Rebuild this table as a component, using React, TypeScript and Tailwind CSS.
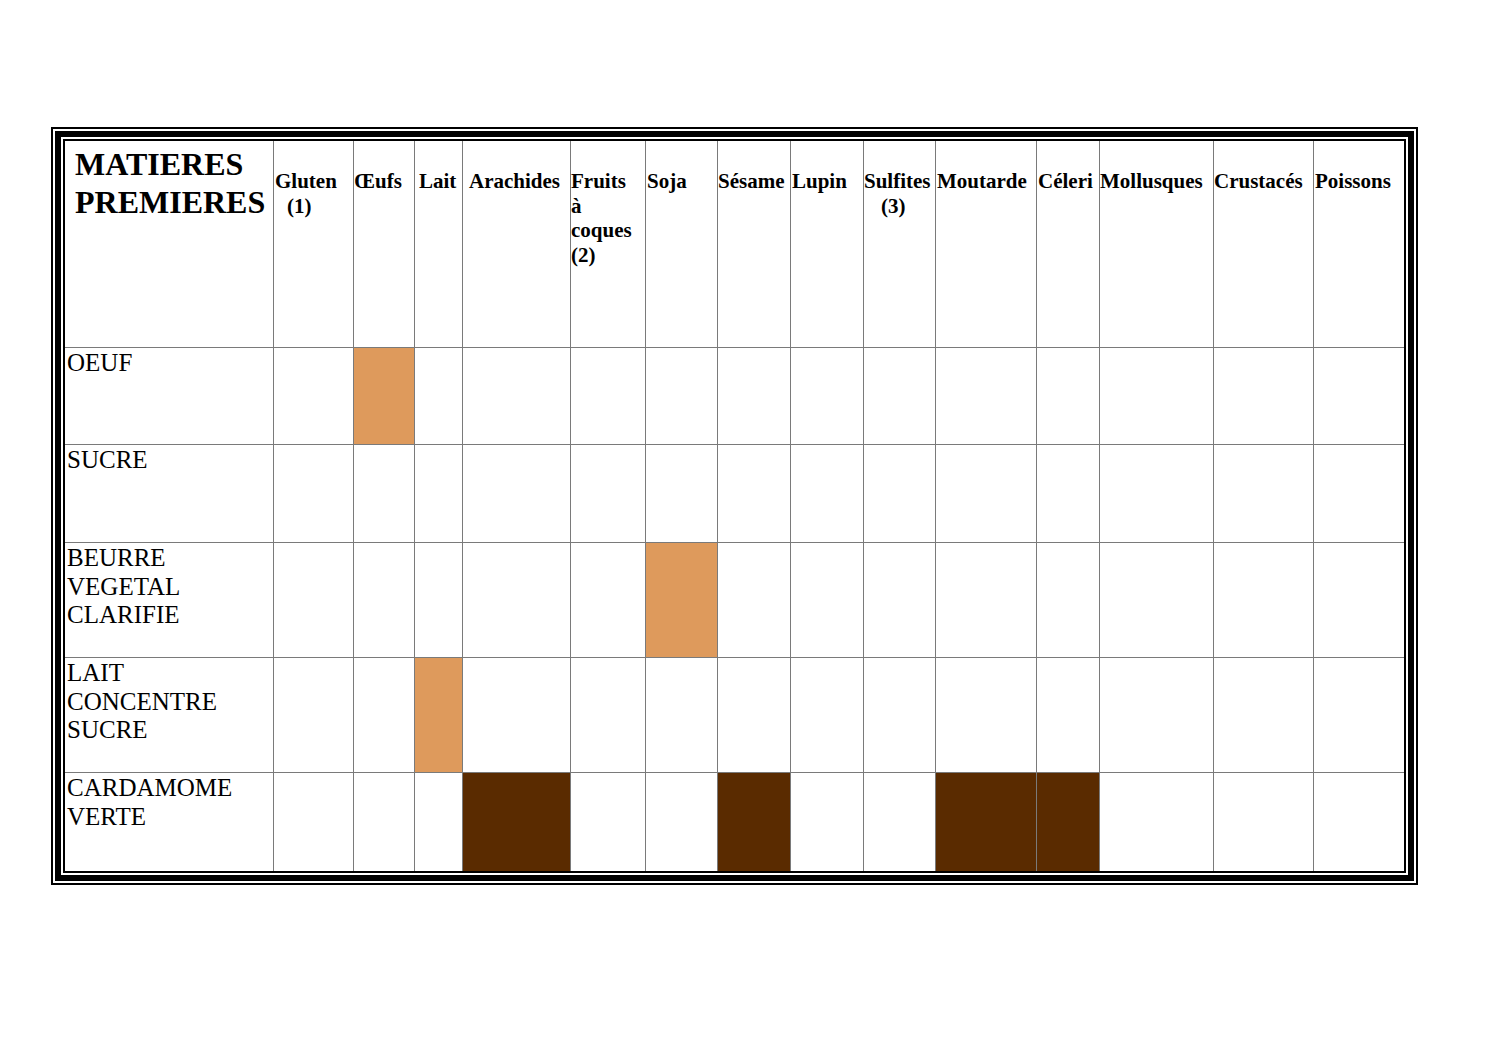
import React from "react";

type Head = { lines: string[]; pads: string[] };

const heads: Head[] = [
  { lines: ["Gluten", "(1)"], pads: ["pl-[1px]", "pl-[13px]"] },
  { lines: ["Œufs"], pads: ["pl-[0px]"] },
  { lines: ["Lait"], pads: ["pl-[4px]"] },
  { lines: ["Arachides"], pads: ["pl-[6px]"] },
  { lines: ["Fruits", "à", "coques", "(2)"], pads: ["pl-[0px]", "pl-[0px]", "pl-[0px]", "pl-[0px]"] },
  { lines: ["Soja"], pads: ["pl-[1px]"] },
  { lines: ["Sésame"], pads: ["pl-[0px]"] },
  { lines: ["Lupin"], pads: ["pl-[1px]"] },
  { lines: ["Sulfites", "(3)"], pads: ["pl-[0px]", "pl-[17px]"] },
  { lines: ["Moutarde"], pads: ["pl-[1px]"] },
  { lines: ["Céleri"], pads: ["pl-[1px]"] },
  { lines: ["Mollusques"], pads: ["pl-[0px]"] },
  { lines: ["Crustacés"], pads: ["pl-[0px]"] },
  { lines: ["Poissons"], pads: ["pl-[1px]"] },
];

type Row = { name: string[]; orange: number[]; brown: number[] };

const rows: Row[] = [
  { name: ["OEUF"], orange: [1], brown: [] },
  { name: ["SUCRE"], orange: [], brown: [] },
  { name: ["BEURRE", "VEGETAL", "CLARIFIE"], orange: [5], brown: [] },
  { name: ["LAIT", "CONCENTRE", "SUCRE"], orange: [2], brown: [] },
  { name: ["CARDAMOME", "VERTE"], orange: [], brown: [3, 6, 9, 10] },
];

export default function App() {
  return (
    <div className="min-h-screen w-full bg-white font-['Liberation_Serif',serif] text-black">
      <div className="pt-[127px] pl-[51px]">
        <div className="w-[1367px] border-2 border-black bg-white p-[2px]">
          <div className="border-[6px] border-black bg-white p-[2px]">
            <div className="border-2 border-black bg-white">
              <div className="grid grid-cols-[208px_79px_60px_47px_107px_74px_71px_72px_72px_71px_100px_62px_113px_99px_90px] grid-rows-[206px_96px_97px_114px_114px_98px] gap-px bg-[#7a7a7a]">
                <div className="bg-white pl-[10px] pt-[4px] text-[32px] font-bold leading-[38px] whitespace-nowrap">
                  <div>MATIERES</div>
                  <div>PREMIERES</div>
                </div>
                {heads.map((h, i) => (
                  <div
                    key={i}
                    className="bg-white pt-[28px] text-[21px] font-bold leading-[24.7px] whitespace-nowrap"
                  >
                    {h.lines.map((l, j) => (
                      <div key={j} className={h.pads[j]}>
                        {l}
                      </div>
                    ))}
                  </div>
                ))}
                {rows.map((r, ri) => (
                  <React.Fragment key={ri}>
                    <div className="bg-white pl-[2px] pt-[1px] text-[25px] leading-[28.5px] whitespace-nowrap">
                      {r.name.map((n, k) => (
                        <div key={k}>{n}</div>
                      ))}
                    </div>
                    {heads.map((_, ci) => (
                      <div
                        key={ci}
                        className={
                          r.orange.includes(ci)
                            ? "bg-[#de9a5c]"
                            : r.brown.includes(ci)
                            ? "bg-[#5a2b00]"
                            : "bg-white"
                        }
                      />
                    ))}
                  </React.Fragment>
                ))}
              </div>
            </div>
          </div>
        </div>
      </div>
    </div>
  );
}
